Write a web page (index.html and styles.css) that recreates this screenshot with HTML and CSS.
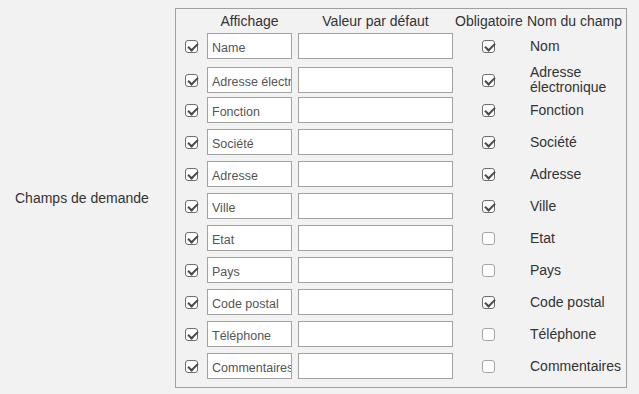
FILE: index.html
```html
<!DOCTYPE html>
<html lang="fr">
  <head>
    <meta charset="UTF-8" />
    <meta name="viewport" content="width=device-width, initial-scale=1.0" />
    <title>Champs de demande</title>
    <link rel="stylesheet" href="styles.css">
  </head>
  <body>
    <div class="ramme">
      <label class="feltnavn">Champs de demande</label>

      <fieldset class="felter">
        <div class="hoved">
          <span></span>
          <span class="hovedAffichage">Affichage</span>
          <span class="hovedValeur">Valeur par défaut</span>
          <span>Obligatoire</span>
          <span>Nom du champ</span>
        </div>

        <div class="rang">
          <input type="checkbox" class="vis" checked />
          <input type="text" class="affichage" value="Name" />
          <input type="text" class="valeur" value="" />
          <input type="checkbox" class="krav" checked />
          <span class="navn">Nom</span>
        </div>
        <div class="rang">
          <input type="checkbox" class="vis" checked />
          <input type="text" class="affichage" value="Adresse électronique" />
          <input type="text" class="valeur" value="" />
          <input type="checkbox" class="krav" checked />
          <span class="navn">Adresse électronique</span>
        </div>
        <div class="rang">
          <input type="checkbox" class="vis" checked />
          <input type="text" class="affichage" value="Fonction" />
          <input type="text" class="valeur" value="" />
          <input type="checkbox" class="krav" checked />
          <span class="navn">Fonction</span>
        </div>
        <div class="rang">
          <input type="checkbox" class="vis" checked />
          <input type="text" class="affichage" value="Société" />
          <input type="text" class="valeur" value="" />
          <input type="checkbox" class="krav" checked />
          <span class="navn">Société</span>
        </div>
        <div class="rang">
          <input type="checkbox" class="vis" checked />
          <input type="text" class="affichage" value="Adresse" />
          <input type="text" class="valeur" value="" />
          <input type="checkbox" class="krav" checked />
          <span class="navn">Adresse</span>
        </div>
        <div class="rang">
          <input type="checkbox" class="vis" checked />
          <input type="text" class="affichage" value="Ville" />
          <input type="text" class="valeur" value="" />
          <input type="checkbox" class="krav" checked />
          <span class="navn">Ville</span>
        </div>
        <div class="rang">
          <input type="checkbox" class="vis" checked />
          <input type="text" class="affichage" value="Etat" />
          <input type="text" class="valeur" value="" />
          <input type="checkbox" class="krav" />
          <span class="navn">Etat</span>
        </div>
        <div class="rang">
          <input type="checkbox" class="vis" checked />
          <input type="text" class="affichage" value="Pays" />
          <input type="text" class="valeur" value="" />
          <input type="checkbox" class="krav" />
          <span class="navn">Pays</span>
        </div>
        <div class="rang">
          <input type="checkbox" class="vis" checked />
          <input type="text" class="affichage" value="Code postal" />
          <input type="text" class="valeur" value="" />
          <input type="checkbox" class="krav" checked />
          <span class="navn">Code postal</span>
        </div>
        <div class="rang">
          <input type="checkbox" class="vis" checked />
          <input type="text" class="affichage" value="Téléphone" />
          <input type="text" class="valeur" value="" />
          <input type="checkbox" class="krav" />
          <span class="navn">Téléphone</span>
        </div>
        <div class="rang">
          <input type="checkbox" class="vis" checked />
          <input type="text" class="affichage" value="Commentaires" />
          <input type="text" class="valeur" value="" />
          <input type="checkbox" class="krav" />
          <span class="navn">Commentaires</span>
        </div>
      </fieldset>
    </div>
  </body>
</html>
```

FILE: styles.css
```css
/* ---------GRUNDLAG------------*/
* {
  margin: 0;
  padding: 0;
  box-sizing: border-box;
}

body {
  background-color: #f2f2f2;
  font-family: "Liberation Sans", Arial, sans-serif;
  font-size: 14px;
  color: #333333;
}

.ramme {
  display: flex;
  padding-top: 8px;
}

.feltnavn {
  width: 175px;
  padding-left: 15px;
  align-self: center;
  line-height: 16px;
}

/* ---------FELTER------------*/

.felter {
  width: 452px;
  border: 1px solid #a0a0a0;
  padding: 4px 4px 8px 4px;
  display: flex;
  flex-direction: column;
  gap: 6px;
}

.hoved,
.rang {
  display: grid;
  grid-template-columns: 24px 90px 161px 72px 1fr;
  align-items: center;
}

.hoved {
  line-height: 16px;
  margin-bottom: -2px;
  white-space: nowrap;
}

.hovedAffichage {
  margin-left: 3px;
  width: 85px;
  text-align: center;
}

.hovedValeur {
  margin-left: 4px;
  width: 155px;
  text-align: center;
}

.rang {
  height: 26px;
}

input[type="text"] {
  height: 26px;
  border: 1px solid #a3a3a3;
  background-color: #ffffff;
  font-family: "Liberation Sans", Arial, sans-serif;
  font-size: 12.5px;
  color: #555555;
  padding: 3px 0 0 4px;
  outline: none;
}

.affichage {
  margin-left: 3px;
  width: 85px;
}

.valeur {
  margin-left: 4px;
  width: 155px;
}

/* ---------AFKRYDSNING------------*/

input[type="checkbox"] {
  appearance: none;
  -webkit-appearance: none;
  width: 13px;
  height: 13px;
  border: 1px solid #a6a6a6;
  border-radius: 3px;
  background-color: #ffffff;
  position: relative;
}

input[type="checkbox"]:checked {
  border-color: #6f6f6f;
}

input[type="checkbox"]:checked::after {
  content: "";
  position: absolute;
  left: 3.5px;
  top: 0;
  width: 4px;
  height: 8px;
  border-right: 2px solid #4a4a4a;
  border-bottom: 2px solid #4a4a4a;
  transform: rotate(45deg);
}

.vis {
  margin-left: 5px;
}

.krav {
  margin-left: 27px;
}

.navn {
  padding-left: 3px;
  line-height: 15px;
}
```
